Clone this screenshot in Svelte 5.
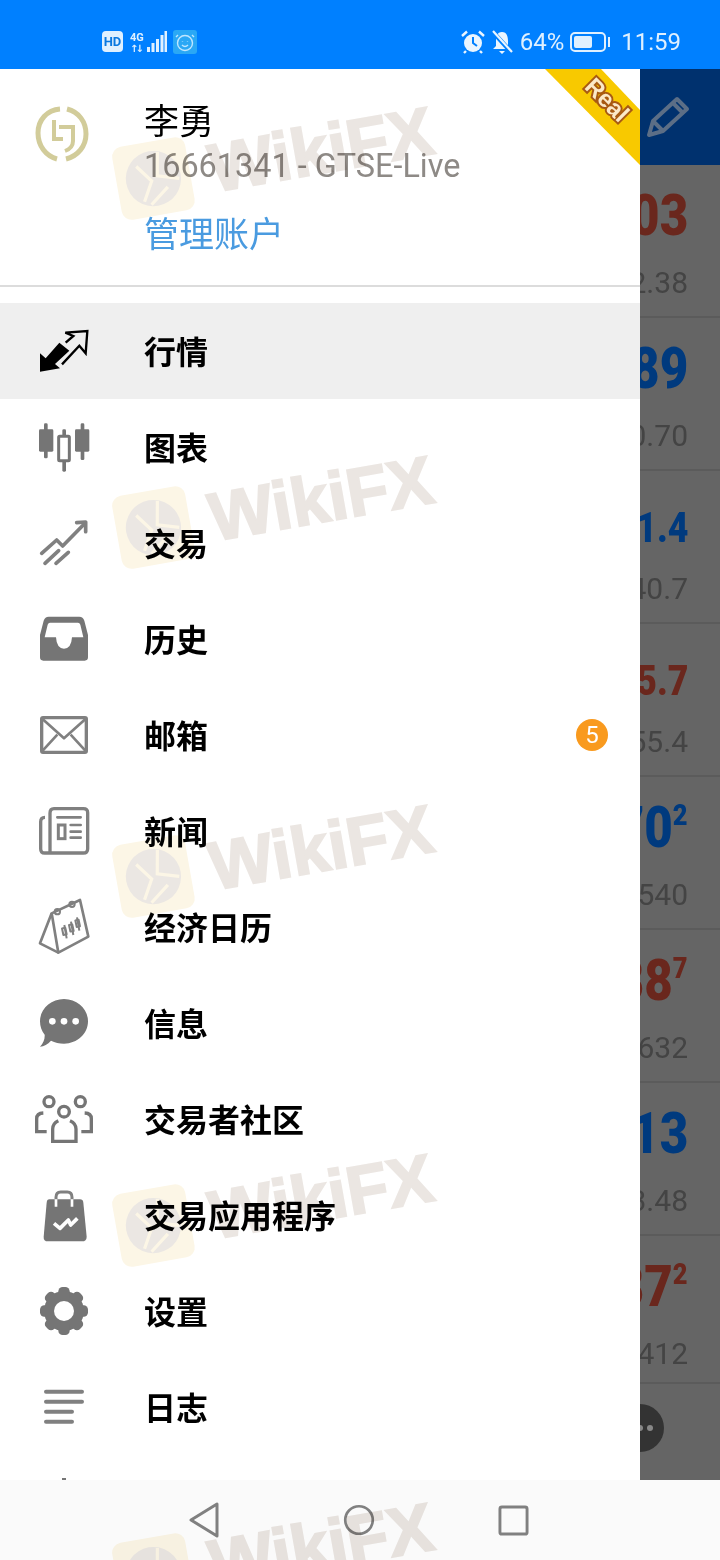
<script>
	const menu = [
		{ id: 'quotes', label: '行情', active: true },
		{ id: 'chart', label: '图表' },
		{ id: 'trade', label: '交易' },
		{ id: 'history', label: '历史' },
		{ id: 'mail', label: '邮箱', badge: 5 },
		{ id: 'news', label: '新闻' },
		{ id: 'calendar', label: '经济日历' },
		{ id: 'chat', label: '信息' },
		{ id: 'community', label: '交易者社区' },
		{ id: 'market', label: '交易应用程序' },
		{ id: 'settings', label: '设置' },
		{ id: 'journal', label: '日志' },
		{ id: 'more', label: '' }
	];

	const quotes = [
		{ price: '03', sub: '2.38', tone: 'red' },
		{ price: '89', sub: '0.70', tone: 'blue' },
		{ price: '1.4', sub: '40.7', tone: 'blue', small: true },
		{ price: '5.7', sub: '55.4', tone: 'red', small: true },
		{ price: '70', sup: '2', sub: '540', tone: 'blue' },
		{ price: '88', sup: '7', sub: '632', tone: 'red' },
		{ price: '13', sub: '3.48', tone: 'blue' },
		{ price: '87', sup: '2', sub: '412', tone: 'red', last: true }
	];

	const gearTeeth = [0, 45, 90, 135];
	const marks = [0, 1, 2, 3, 4];
</script>

{#snippet icon(id)}
	{#if id === 'quotes'}
		<svg viewBox="96 57 192 192">
			<path d="M120 215V160L137 175L178 128L208 152L165 192L180 205Z" fill="#000" />
			<path d="M197 128L220 108L196 98L262 93L257 160L238 137L186 193" fill="none" stroke="#000" stroke-width="7" />
		</svg>
	{:else if id === 'chart'}
		<svg viewBox="96 345 192 192" fill="#757575">
			<rect x="132" y="370" width="11" height="105" rx="4" />
			<rect x="117" y="388" width="43" height="67" rx="4" />
			<rect x="187" y="388" width="11" height="127" rx="4" />
			<rect x="176" y="409" width="32" height="73" rx="3" fill="#fff" stroke="#757575" stroke-width="9" />
			<rect x="242" y="370" width="11" height="110" rx="4" />
			<rect x="225" y="388" width="43" height="67" rx="4" />
		</svg>
	{:else if id === 'trade'}
		<svg viewBox="96 633 192 192" fill="none" stroke="#808080" stroke-width="11" stroke-linecap="round" stroke-linejoin="round">
			<path d="M125 760L170 720L188 738L255 670" />
			<path d="M230 668L257 666L257 695" />
			<path d="M135 790L176 752" />
			<path d="M168 790L205 757" />
		</svg>
	{:else if id === 'history'}
		<svg viewBox="96 21 192 192">
			<path fill="#757575" fill-rule="evenodd" d="M146 50H238Q249 50 253 62L264 105V172Q264 182 254 182H130Q120 182 120 172V105L131 62Q135 50 146 50ZM150 68Q145 68 143 74L134 112H168Q170 146 192 146Q214 146 216 112H250L241 74Q239 68 234 68Z" />
		</svg>
	{:else if id === 'mail'}
		<svg viewBox="96 309 192 192" fill="none" stroke="#808080" stroke-linejoin="round">
			<rect x="125" y="353" width="134" height="104" rx="4" stroke-width="10" />
			<path d="M125 355L192 415L259 355M128 452L172 404M256 452L212 404" stroke-width="8" />
		</svg>
	{:else if id === 'news'}
		<svg viewBox="96 597 192 192" fill="none" stroke="#808080">
			<path d="M150 760V640Q150 626 162 626H250Q263 626 263 638V746Q263 759 250 759H134Q122 759 122 746V665Q122 652 135 652" stroke-width="10" />
			<path d="M172 652H242M212 675H242M212 695H242M212 713H242" stroke-width="8" stroke-linecap="round" />
			<rect x="175" y="675" width="20" height="41" stroke-width="9" />
		</svg>
	{:else if id === 'calendar'}
		<svg viewBox="96 45 192 192" fill="none" stroke="#808080" stroke-width="8" stroke-linejoin="round">
			<path d="M155 100L240 60L265 170L175 218Z" />
			<path d="M155 100L120 190L175 218" />
			<circle cx="172" cy="95" r="8" stroke-width="6" />
			<circle cx="216" cy="73" r="8" stroke-width="6" />
			<g stroke-width="6">
				<path d="M193 135L200 175M213 125L220 165M231 112L238 152" />
				<rect x="188" y="144" width="10" height="20" transform="rotate(-12 193 154)" />
				<rect x="209" y="134" width="10" height="20" transform="rotate(-12 214 144)" />
				<rect x="228" y="120" width="10" height="20" transform="rotate(-12 233 130)" />
			</g>
		</svg>
	{:else if id === 'chat'}
		<svg viewBox="96 333 192 192">
			<path fill="#757575" d="M192 357C232 357 264 387 264 424C264 461 232 491 192 491C178 491 165 488 153 482C143 493 132 499 120 500C130 490 135 478 134 464C125 453 120 439 120 424C120 387 152 357 192 357Z" />
			<circle cx="157" cy="424" r="10" fill="#fff" />
			<circle cx="192" cy="424" r="10" fill="#fff" />
			<circle cx="227" cy="424" r="10" fill="#fff" />
		</svg>
	{:else if id === 'community'}
		<svg viewBox="96 621 192 192" fill="none" stroke="#757575" stroke-width="10">
			<circle cx="147" cy="665" r="15" />
			<circle cx="241" cy="665" r="15" />
			<circle cx="192" cy="695" r="16" />
			<path d="M130 699Q110 700 110 716V755H140" />
			<path d="M254 699Q274 700 274 716V755H244" />
			<path d="M175 722Q158 730 158 747V784H228V747Q228 730 210 722" />
		</svg>
	{:else if id === 'market'}
		<svg viewBox="96 39 192 192">
			<path fill="#757575" d="M148 88H240Q249 88 250 98L260 200Q260 214 246 214H144Q130 214 131 200L140 98Q141 88 148 88Z" />
			<path d="M168 88V82Q168 66 182 66H202Q216 66 216 82V88" fill="none" stroke="#808080" stroke-width="9" />
			<path d="M168 88V110M216 88V110" fill="none" stroke="#fff" stroke-width="8" />
			<path d="M162 160L180 175L205 150L212 165L232 145" fill="none" stroke="#fff" stroke-width="11" stroke-linejoin="round" />
		</svg>
	{:else if id === 'settings'}
		<svg viewBox="96 327 192 192" fill="#757575">
			<circle cx="192" cy="423" r="60" />
			{#each gearTeeth as deg}
				<rect x="175" y="351" width="34" height="144" rx="13" transform="rotate({deg} 192 423)" />
			{/each}
			<circle cx="192" cy="423" r="30" fill="#fff" />
		</svg>
	{:else if id === 'journal'}
		<svg viewBox="96 615 192 192" fill="none" stroke="#808080" stroke-width="12" stroke-linecap="round">
			<path d="M138 665H246M138 695H246M138 725H216M138 755H216" />
		</svg>
	{:else}
		<svg viewBox="0 0 64 64">
			<rect x="30" y="7" width="4" height="20" fill="#757575" />
		</svg>
	{/if}
{/snippet}

<div class="phone">
	<div class="status">
		<div class="status-group">
			<span class="hd">HD</span>
			<span class="net">
				<span class="net-type">4G<br /><span class="arrows">↑↓</span></span>
				<svg class="signal" viewBox="0 0 20 24" fill="#dff0ff">
					<rect x="0" y="17" width="3" height="5" />
					<rect x="4.5" y="13" width="3" height="9" />
					<rect x="9" y="9" width="3" height="13" />
					<rect x="13.5" y="5" width="3" height="17" />
					<rect x="17.5" y="1" width="2.5" height="21" />
				</svg>
			</span>
			<span class="face">
				<svg viewBox="0 0 24 24" fill="none" stroke="#bfe6ff" stroke-width="1.4">
					<circle cx="12" cy="13" r="7.5" />
					<path d="M5 5L3 7M19 5L21 7M9 15Q12 18 15 15" />
					<path d="M9.5 11V11.5M14.5 11V11.5" />
				</svg>
			</span>
		</div>
		<div class="status-group right">
			<svg class="st-icon" viewBox="0 0 24 24">
				<circle cx="12" cy="13" r="9" fill="#eaf5ff" />
				<path d="M12 7V13L16 16" fill="none" stroke="#0080ff" stroke-width="2" />
				<path d="M1 6L6 1.5M23 6L18 1.5M5 21L3 23M19 21L21 23" stroke="#eaf5ff" stroke-width="2.4" />
			</svg>
			<svg class="st-icon bell" viewBox="0 0 24 24">
				<path d="M12 2C7 2 6 7 6 11V16L3 19H21L18 16V11C18 7 17 2 12 2ZM9 21H15L12 24Z" fill="#eaf5ff" />
				<path d="M2 1L22 23" stroke="#0080ff" stroke-width="4.5" />
				<path d="M3 1L22 22" stroke="#eaf5ff" stroke-width="2.2" />
			</svg>
			<span class="pct">64%</span>
			<span class="battery"><span class="level" style="width: 64%"></span></span>
			<span class="clock">11:59</span>
		</div>
	</div>

	<div class="main">
		<aside class="drawer">
			<header class="account">
				<svg class="logo" viewBox="0 0 64 64" fill="none" stroke="#d2cc9a" stroke-width="5">
					<path d="M30 8C17 9 8 19 8 32C8 45 16 55 27 58" />
					<path d="M37 8C49 11 56 21 56 33C56 45 48 55 36 58" />
					<path d="M24 19V38H33" stroke-width="4" />
					<path d="M29 26H43V40Q43 47 35 50" stroke-width="4" />
				</svg>
				<div class="who">
					<div class="name">李勇</div>
					<div class="login">16661341 - GTSE-Live</div>
					<div class="manage">管理账户</div>
				</div>
				<div class="ribbon"></div>
				<span class="ribbon-text">Real</span>
			</header>

			<ul class="menu">
				{#each menu as item}
					<li class:active={item.active}>
						{@render icon(item.id)}
						{#if item.label}
							<span class="label">{item.label}</span>
						{/if}
						{#if item.badge}
							<span class="badge">{item.badge}</span>
						{/if}
					</li>
				{/each}
			</ul>
		</aside>

		<section class="behind">
			<div class="behind-top">
				<svg viewBox="0 0 44 44" fill="none" stroke="#5c6e86" stroke-width="4" stroke-linejoin="round">
					<path d="M3 41L7 27L31 5L41 15L17 37Z" />
					<path d="M7 27L17 37M27 9L37 19" />
				</svg>
			</div>
			{#each quotes as q}
				<div class="quote" class:last={q.last}>
					<div class="price {q.tone}" class:small={q.small}>{q.price}{#if q.sup}<sup>{q.sup}</sup>{/if}</div>
					<div class="sub">{q.sub}</div>
				</div>
			{/each}
			<div class="fab"><i></i><i></i><i></i></div>
		</section>
	</div>

	<nav class="nav">
		<svg viewBox="0 0 32 36"><path d="M29 2V34L3 18Z" /></svg>
		<svg viewBox="0 0 36 36"><circle cx="18" cy="18" r="15.5" /></svg>
		<svg class="recent" viewBox="0 0 32 32"><rect x="2" y="2" width="28" height="28" rx="2" /></svg>
	</nav>

	{#each marks as n}
		<div class="mark" style="top: {n * 349 + 145}px">
			<div class="tile">
				<svg viewBox="0 0 64 64">
					<circle cx="32" cy="32" r="26" fill="#ebe7e3" />
					<path d="M18 18L30 34L20 52M40 8L36 30L56 36M26 56L44 42" fill="none" stroke="#fcf6e6" stroke-width="3" />
				</svg>
			</div>
			<span class="mark-text">WikiFX</span>
		</div>
	{/each}
</div>

<style>
	:global(body) {
		margin: 0;
		background: #fff;
	}

	.phone {
		position: relative;
		width: 720px;
		height: 1560px;
		overflow: hidden;
		display: flex;
		flex-direction: column;
		font-family: 'Noto Sans CJK SC', 'Noto Sans', sans-serif;
	}

	.status {
		flex: none;
		height: 69px;
		background: #0080ff;
		display: flex;
		justify-content: space-between;
		align-items: center;
		padding: 14px 39px 0 102px;
		box-sizing: border-box;
		color: #dff0ff;
		font-family: Roboto, sans-serif;
	}

	.status-group {
		display: flex;
		align-items: center;
	}

	.hd {
		width: 21px;
		height: 21px;
		border-radius: 4px;
		background: #dff0ff;
		color: #0a78e0;
		font-size: 13px;
		font-weight: 700;
		line-height: 21px;
		text-align: center;
	}

	.net {
		display: flex;
		align-items: flex-end;
		margin-left: 7px;
		height: 24px;
	}

	.net-type {
		width: 17px;
		font-size: 11px;
		font-weight: 700;
		line-height: 11px;
	}

	.arrows {
		font-family: 'DejaVu Sans', sans-serif;
		font-size: 10px;
		letter-spacing: -3px;
	}

	.signal {
		width: 20px;
		height: 24px;
	}

	.face {
		width: 24px;
		height: 24px;
		margin-left: 6px;
		border-radius: 3px;
		background: #2aa8f5;
		display: flex;
	}

	.st-icon {
		width: 24px;
		height: 24px;
		margin-right: 5px;
	}

	.st-icon.bell {
		margin-right: 6px;
	}

	.pct {
		font-size: 24px;
		margin-right: 6px;
	}

	.battery {
		position: relative;
		width: 36px;
		height: 20px;
		border: 2px solid #dff0ff;
		border-radius: 5px;
		box-sizing: border-box;
		padding: 2px;
		margin-right: 15px;
		display: flex;
	}

	.battery::after {
		content: '';
		position: absolute;
		right: -6px;
		top: 3px;
		width: 2px;
		height: 10px;
		background: #dff0ff;
	}

	.level {
		background: #dff0ff;
		border-radius: 2px;
	}

	.clock {
		font-size: 24px;
	}

	.main {
		flex: none;
		height: 1411px;
		display: flex;
		overflow: hidden;
	}

	.drawer {
		flex: none;
		width: 640px;
		background: #fff;
		overflow: hidden;
	}

	.account {
		position: relative;
		height: 218px;
		box-sizing: border-box;
		padding: 30px 0 0 30px;
		border-bottom: 2px solid #dcdcdc;
		display: flex;
		align-items: flex-start;
		overflow: hidden;
	}

	.logo {
		flex: none;
		width: 64px;
		height: 64px;
		margin-top: 2px;
	}

	.who {
		margin-left: 50px;
	}

	.name {
		font-size: 35px;
		line-height: 40px;
		color: #000;
	}

	.login {
		font-family: Roboto, sans-serif;
		font-size: 32.4px;
		line-height: 40px;
		margin-top: 7px;
		color: #8e8a86;
	}

	.manage {
		font-size: 35px;
		line-height: 40px;
		margin-top: 26px;
		color: #4a9be0;
	}

	.ribbon {
		position: absolute;
		right: 0;
		top: 0;
		width: 95px;
		height: 96px;
		background: #f8c900;
		clip-path: polygon(0 0, 56px 0, 95px 41px, 95px 96px);
	}

	.ribbon-text {
		position: absolute;
		right: 0;
		top: 17px;
		width: 66px;
		text-align: center;
		font-family: 'Liberation Sans', sans-serif;
		font-size: 24px;
		line-height: 28px;
		font-weight: 700;
		color: #fbe9c8;
		-webkit-text-stroke: 4px #a85a12;
		paint-order: stroke fill;
		transform: rotate(45deg);
	}

	.menu {
		list-style: none;
		margin: 16px 0 0;
		padding: 0;
	}

	.menu li {
		height: 96px;
		display: flex;
		align-items: center;
		padding: 0 32px;
	}

	.menu li.active {
		background: #efefef;
	}

	.menu li svg {
		flex: none;
		width: 64px;
		height: 64px;
		margin-right: 48px;
	}

	.label {
		font-size: 32px;
		line-height: 38px;
		font-weight: 700;
		color: #000;
		margin-bottom: 2px;
	}

	.badge {
		margin-left: auto;
		width: 32px;
		height: 32px;
		border-radius: 50%;
		background: #f99a1e;
		color: #fff;
		font-family: Roboto, sans-serif;
		font-size: 24px;
		line-height: 32px;
		text-align: center;
	}

	.behind {
		position: relative;
		flex: 1;
		min-width: 0;
		background: #656565;
		overflow: hidden;
		font-family: Roboto, sans-serif;
	}

	.behind-top {
		height: 96px;
		background: #00316e;
		display: flex;
		justify-content: flex-end;
		align-items: center;
		padding: 0 30px 2px 0;
		box-sizing: border-box;
	}

	.behind-top svg {
		width: 44px;
		height: 44px;
	}

	.quote {
		height: 153px;
		box-sizing: border-box;
		border-bottom: 2px solid #5b5b5b;
		padding: 20px 32px 0 0;
		display: flex;
		flex-direction: column;
		align-items: flex-end;
	}

	.quote.last {
		height: 148px;
	}

	.price {
		height: 60px;
		font-size: 58px;
		line-height: 60px;
		font-weight: 900;
		white-space: nowrap;
		transform: scaleX(0.85);
		transform-origin: right center;
	}

	.price.small {
		font-size: 42px;
		line-height: 74px;
	}

	.price sup {
		font-size: 30px;
		line-height: 0;
		vertical-align: 22px;
	}

	.red {
		color: #6a271d;
	}

	.blue {
		color: #003a7e;
	}

	.sub {
		height: 40px;
		margin-top: 18px;
		font-size: 30px;
		line-height: 40px;
		color: #444;
		white-space: nowrap;
	}

	.fab {
		position: absolute;
		left: -24px;
		top: 1335px;
		width: 48px;
		height: 48px;
		border-radius: 50%;
		background: #333;
		display: flex;
		justify-content: center;
		align-items: center;
		gap: 4px;
	}

	.fab i {
		width: 6px;
		height: 6px;
		border-radius: 50%;
		background: #888;
	}

	.nav {
		flex: none;
		height: 80px;
		background: #fafafa;
		display: flex;
		justify-content: center;
		align-items: center;
		gap: 123px;
		padding-right: 3px;
	}

	.nav svg {
		width: 32px;
		height: 36px;
		fill: none;
		stroke: #808080;
		stroke-width: 3;
		stroke-linejoin: round;
	}

	.nav svg.recent {
		width: 31px;
		height: 31px;
	}

	.mark {
		position: absolute;
		left: 117px;
		display: flex;
		align-items: center;
		gap: 20px;
		transform: rotate(-10deg);
		transform-origin: left center;
		pointer-events: none;
		mix-blend-mode: multiply;
	}

	.tile {
		width: 74px;
		height: 74px;
		border-radius: 10px;
		background: #fcf6e6;
		padding: 3px;
		box-sizing: border-box;
	}

	.mark-text {
		font-family: 'Liberation Sans', sans-serif;
		font-size: 68px;
		line-height: 80px;
		font-weight: 700;
		color: #ebe6e2;
		-webkit-text-stroke: 2px #ebe6e2;
	}
</style>
